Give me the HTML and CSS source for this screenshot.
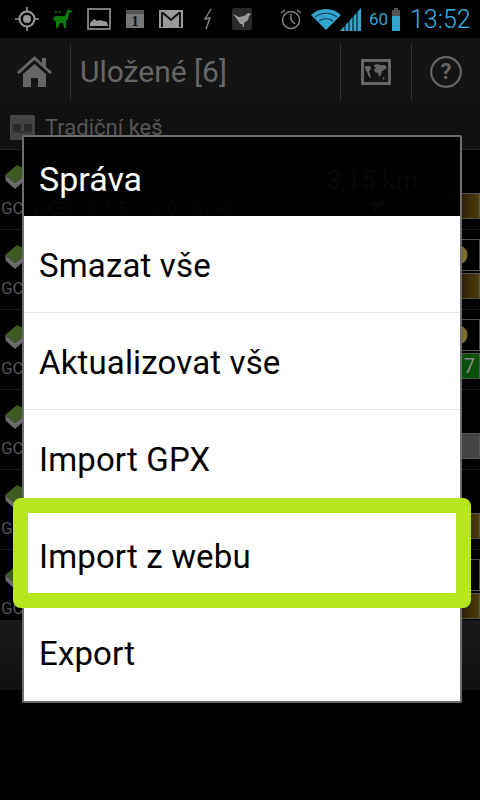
FILE: index.html
```html
<!DOCTYPE html>
<html lang="en">
<head>
  <meta charset="UTF-8">
  <meta name="viewport" content="width=device-width, initial-scale=1.0">
  <title>Uložené</title>
  <link rel="stylesheet" href="styles.css">
</head>
<body>
  <div class="screen">
    <!-- Status bar -->
    <div class="status-bar">
      <svg class="st st-gps" viewBox="0 0 24 24"><circle cx="12" cy="12" r="7.5" fill="none" stroke="#999" stroke-width="2"/><circle cx="12" cy="12" r="4" fill="#999"/><path d="M12 0v4M12 20v4M0 12h4M20 12h4" stroke="#999" stroke-width="1.6"/></svg>
      <svg class="st st-llama" viewBox="0 0 22 22"><path d="M1 10c0-1 2-2 4-2h8l2-5 1-2 1 1 4 1-1 1-3 1-1 6-2 2v7h-2l-1-5H8l-2 5H4l0-6-2-2z" fill="#0c7a0c"/><path d="M3 4h7" stroke="#0c7a0c" stroke-width="1.5" stroke-dasharray="2 1.5"/></svg>
      <svg class="st st-pic" viewBox="0 0 24 22"><rect x="1" y="1" width="22" height="20" fill="none" stroke="#999" stroke-width="1.6"/><path d="M3 18v-3l4-4 3 2 3-1 3 1 4 1 1 4z" fill="#999"/></svg>
      <svg class="st st-cal" viewBox="0 0 18 18"><rect width="18" height="18" fill="#777"/><rect width="18" height="4" fill="#555"/><text x="9" y="16" text-anchor="middle" class="cal-num">1</text></svg>
      <svg class="st st-mail" viewBox="0 0 24 18"><rect width="24" height="18" fill="#999"/><path d="M3 17V3h1l8 7 8-7h1v14" fill="none" stroke="#111" stroke-width="2"/></svg>
      <svg class="st st-bolt" viewBox="0 0 10 22"><path d="M8 1 2 11l5-1-4 11" fill="none" stroke="#888" stroke-width="1.4"/></svg>
      <svg class="st st-bird" viewBox="0 0 20 22"><rect width="20" height="22" rx="2" fill="#2a2a2a"/><path d="M1 6l6 3 5-1 4-3 3 1-2 2-1 4-4 3v4h-1l-1-3-2 0-1-2z" fill="#999"/></svg>
      <svg class="st st-alarm" viewBox="0 0 22 22"><circle cx="11" cy="12" r="8.5" fill="none" stroke="#888" stroke-width="1.4"/><path d="M11 6v6l4 4" fill="none" stroke="#888" stroke-width="1.4"/><path d="M1 5l4-3M21 5l-4-3" stroke="#888" stroke-width="1.4"/></svg>
      <svg class="st st-wifi" viewBox="0 0 30 22"><path d="M0 7C8-1 22-1 30 7l-15 15z" fill="#33a5d0"/><path d="M4 9c6-5 16-5 22 0M8 13c4-3 10-3 14 0" fill="none" stroke="#0b3a4d" stroke-width="1.2"/></svg>
      <svg class="st st-signal" viewBox="0 0 22 23"><path d="M0 23 21 0v23z" fill="#33a5d0"/><path d="M5 23V16M9 23V12M13 23V8M17 23V4" stroke="#000" stroke-width="1"/></svg>
      <span class="st-level">60</span>
      <span class="battery"><span class="battery-top"></span><span class="battery-empty"></span><span class="battery-fill"></span></span>
      <span class="clock">13:52</span>
    </div>

    <!-- Action bar -->
    <div class="action-bar">
      <div class="action-home">
        <svg class="home-icon" viewBox="0 0 35 31"><path d="M0 16 17.500 0 25 7V2h4v9l6 5-2 2L17.500 4 2 18z" fill="#666"/><path d="M6 18 17.500 8 29 18v13h-8v-9h-7v9H6z" fill="#666"/></svg>
      </div>
      <div class="action-title">Uložené [6]</div>
      <div class="action-btn action-map">
        <svg class="map-icon" viewBox="0 0 30 26"><rect width="30" height="26" fill="#666"/><rect x="3" y="3" width="24" height="20" fill="#141414"/><path d="M4 7h5l1 3-2 2 1 3 1 4-2-1-2-5-2-3zM13 6l4-1 2 1 5 0 2 3-3 2-2 1-1 4-2 2-1-4-3-1-1-3 2-1-2-2zM22 18l2 1-2 2z" fill="#666"/></svg>
      </div>
      <div class="action-btn action-help">
        <svg class="help-icon" viewBox="0 0 32 32"><circle cx="16" cy="16" r="14.800" fill="none" stroke="#666" stroke-width="2.200"/><text x="16" y="23" text-anchor="middle" class="help-mark">?</text></svg>
      </div>
    </div>

    <!-- List behind the dialog -->
    <div class="group-header">
      <svg class="group-icon" viewBox="0 0 25 25"><rect width="25" height="25" rx="2" fill="#444"/><path d="M3 9h8v7H3zM14 9h8v7h-8z" fill="#2b2b2b"/><path d="M3 17h19" stroke="#222" stroke-width="1"/></svg>
      <span class="group-name">Tradiční keš</span>
    </div>

    <div class="row">
      <div class="row-top"><svg class="box-icon" viewBox="0 0 18 24"><path d="M0 10 12 0l6 3v9l-8 6z" fill="#3f5a20"/><path d="M0 10l10 8 8-6v5l-8 7-9-8z" fill="#6a6a6a"/></svg><span class="dist">3,15 km</span></div>
      <div class="row-sub">GC1AXZ9 · D 1.5 · T 2.0 · Small</div>
      <svg class="row-arrow" viewBox="0 0 22 13"><path d="M0 2 22 0 8 13z" fill="#444"/></svg>
      <div class="badges"><span class="badge badge-brown"></span></div>
    </div>
    <div class="row">
      <div class="row-top"><svg class="box-icon" viewBox="0 0 18 24"><path d="M0 10 12 0l6 3v9l-8 6z" fill="#3f5a20"/><path d="M0 10l10 8 8-6v5l-8 7-9-8z" fill="#6a6a6a"/></svg></div>
      <div class="row-sub">GC</div>
      <div class="badges"><span class="badge badge-coin"></span><span class="badge badge-brown"></span></div>
    </div>
    <div class="row">
      <div class="row-top"><svg class="box-icon" viewBox="0 0 18 24"><path d="M0 10 12 0l6 3v9l-8 6z" fill="#3f5a20"/><path d="M0 10l10 8 8-6v5l-8 7-9-8z" fill="#6a6a6a"/></svg></div>
      <div class="row-sub">GC</div>
      <div class="badges"><span class="badge badge-coin"></span><span class="badge badge-green">7</span></div>
    </div>
    <div class="row">
      <div class="row-top"><svg class="box-icon" viewBox="0 0 18 24"><path d="M0 10 12 0l6 3v9l-8 6z" fill="#3f5a20"/><path d="M0 10l10 8 8-6v5l-8 7-9-8z" fill="#6a6a6a"/></svg></div>
      <div class="row-sub">GC</div>
      <div class="badges"><span class="badge badge-grey"></span></div>
    </div>
    <div class="row">
      <div class="row-top"><svg class="box-icon" viewBox="0 0 18 24"><path d="M0 10 12 0l6 3v9l-8 6z" fill="#3f5a20"/><path d="M0 10l10 8 8-6v5l-8 7-9-8z" fill="#6a6a6a"/></svg></div>
      <div class="row-sub">GC</div>
      <div class="badges"><span class="badge badge-brown"></span></div>
    </div>
    <div class="row row-last">
      <div class="row-top"><svg class="box-icon" viewBox="0 0 18 24"><path d="M0 10 12 0l6 3v9l-8 6z" fill="#3f5a20"/><path d="M0 10l10 8 8-6v5l-8 7-9-8z" fill="#6a6a6a"/></svg></div>
      <div class="row-sub">GC</div>
      <div class="badges"><span class="badge badge-coin"></span><span class="badge badge-brown"></span></div>
    </div>
    <div class="bottom-bar"></div>

    <!-- Dialog -->
    <div class="dialog">
      <div class="dialog-title">Správa</div>
      <div class="dialog-body">
        <div class="dialog-item">Smazat vše</div>
        <div class="dialog-item">Aktualizovat vše</div>
        <div class="dialog-item">Import GPX</div>
        <div class="dialog-item">Import z webu</div>
        <div class="dialog-item">Export</div>
      </div>
    </div>

    <!-- Highlight drawn over the screenshot -->
    <div class="highlight"></div>
  </div>
</body>
</html>
```

FILE: styles.css
```css
/* Android dialog over a dimmed list */
html, body {
  margin: 0;
  padding: 0;
  width: 480px;
  height: 800px;
  overflow: hidden;
  background-color: #000;
  font-family: 'Roboto', 'Liberation Sans', sans-serif;
}
.screen {
  position: relative;
  width: 480px;
  height: 800px;
  overflow: hidden;
  background-color: #000;
}

/* status bar */
.status-bar {
  height: 38px;
  display: flex;
  align-items: center;
  background-color: #000;
  padding-left: 15px;
  box-sizing: border-box;
}
.st { display: block; flex: none; }
.st-gps { width: 24px; height: 24px; }
.st-llama { width: 22px; height: 22px; margin-left: 13px; }
.st-pic { width: 24px; height: 22px; margin-left: 13px; }
.st-cal { width: 18px; height: 18px; margin-left: 15px; }
.st-mail { width: 24px; height: 18px; margin-left: 15px; }
.st-bolt { width: 10px; height: 22px; margin-left: 20px; }
.st-bird { width: 20px; height: 22px; margin-left: 19px; }
.st-alarm { width: 22px; height: 22px; margin-left: 28px; }
.st-wifi { width: 30px; height: 22px; margin-left: 9px; }
.st-signal { width: 22px; height: 23px; margin-left: -1px; }
.cal-num { font-family: 'Liberation Serif', serif; font-size: 14px; font-weight: bold; fill: #111; }
.st-level {
  width: 20px;
  margin-left: 7px;
  margin-right: 3px;
  color: #33a5d0;
  font-size: 17px;
}
.battery {
  width: 8px;
  height: 23px;
  display: flex;
  flex-direction: column;
  align-items: center;
  flex: none;
}
.battery-top { width: 4px; height: 2px; background-color: #555; }
.battery-empty { width: 8px; height: 6px; background-color: #555; }
.battery-fill { width: 8px; height: 15px; background-color: #33a5d0; }
.clock {
  margin-left: 10px;
  color: #33b5e5;
  font-size: 25px;
  font-weight: 300;
}

/* action bar */
.action-bar {
  height: 68px;
  display: flex;
  align-items: center;
  background-color: #141414;
  border-bottom: 1px solid #0a0a0a;
  box-sizing: border-box;
}
.action-home {
  width: 71px;
  height: 56px;
  display: flex;
  align-items: center;
  padding-left: 17px;
  box-sizing: border-box;
  border-right: 1px solid #333;
}
.home-icon { width: 35px; height: 31px; }
.action-title {
  flex: 1;
  padding-left: 9px;
  color: #666;
  font-size: 30px;
}
.action-btn {
  height: 56px;
  display: flex;
  align-items: center;
  justify-content: center;
  box-sizing: border-box;
  border-left: 1px solid #333;
}
.action-map { width: 71px; }
.action-help { width: 69px; }
.map-icon { width: 30px; height: 26px; }
.help-icon { width: 32px; height: 32px; }
.help-mark { font-size: 22px; font-weight: bold; fill: #666; }

/* list */
.group-header {
  height: 44px;
  display: flex;
  align-items: center;
  gap: 10px;
  padding-left: 10px;
  background-color: #111;
  border-bottom: 1px solid #222;
  box-sizing: border-box;
}
.group-icon { width: 25px; height: 25px; }
.group-name { color: #555; font-size: 22px; }
.row {
  position: relative;
  height: 80px;
  box-sizing: border-box;
  padding: 15px 0 0 5px;
  border-bottom: 1px solid #1c1c1c;
}
.row-last { height: 70px; border-bottom: none; }
.row-top {
  height: 28px;
  display: flex;
  align-items: flex-start;
  justify-content: space-between;
  padding-right: 62px;
}
.box-icon { width: 18px; height: 24px; }
.dist { color: #666; font-size: 26px; }
.row-sub {
  margin-top: 5px;
  margin-left: -4px;
  color: #555;
  font-size: 17px;
  white-space: nowrap;
}
.row-arrow {
  position: absolute;
  top: 50px;
  left: 367px;
  width: 22px;
  height: 13px;
}
.badges {
  position: absolute;
  top: 0;
  right: 0;
  bottom: 0;
  width: 42px;
  display: flex;
  flex-direction: column;
  justify-content: flex-end;
  gap: 2px;
  padding-bottom: 10px;
  box-sizing: border-box;
}
.row-last .badges { padding-bottom: 1px; }
.badge {
  display: block;
  box-sizing: border-box;
  height: 26px;
  border: 1px solid #555;
  color: #888;
  font-size: 20px;
  line-height: 24px;
  text-align: right;
  padding-right: 4px;
}
.badge-brown { background: linear-gradient(to right, #000, #4e3a08); }
.badge-grey { background-color: #444; }
.badge-green { background-color: #0a520a; }
.badge-coin {
  height: 32px;
  background: radial-gradient(circle at 19px 50%, #7a6c2a 0, #7a6c2a 9px, #000 10px);
}

.bottom-bar {
  height: 70px;
  background: linear-gradient(to bottom, #1a1a1a, #101010);
}

/* dialog */
.dialog {
  position: absolute;
  top: 135px;
  left: 22px;
  width: 440px;
  box-sizing: border-box;
  border: 2px solid #6e6e6e;
  border-radius: 2px;
}
.dialog-title {
  height: 79px;
  display: flex;
  align-items: center;
  padding: 4px 0 0 15px;
  box-sizing: border-box;
  color: #fff;
  font-size: 34px;
  background-color: rgba(0, 0, 0, 0.93);
}
.dialog-body { background-color: #fff; }
.dialog-item {
  height: 97px;
  display: flex;
  align-items: center;
  padding: 2px 0 0 15px;
  box-sizing: border-box;
  color: #000;
  font-size: 33px;
  letter-spacing: 0.15px;
  border-bottom: 1px solid #e4e4e4;
}
.dialog-item:last-child { border-bottom: none; }

.highlight {
  position: absolute;
  top: 498px;
  left: 13px;
  width: 458px;
  height: 110px;
  box-sizing: border-box;
  border: 15px solid #b6e61e;
  border-radius: 8px;
}
```
